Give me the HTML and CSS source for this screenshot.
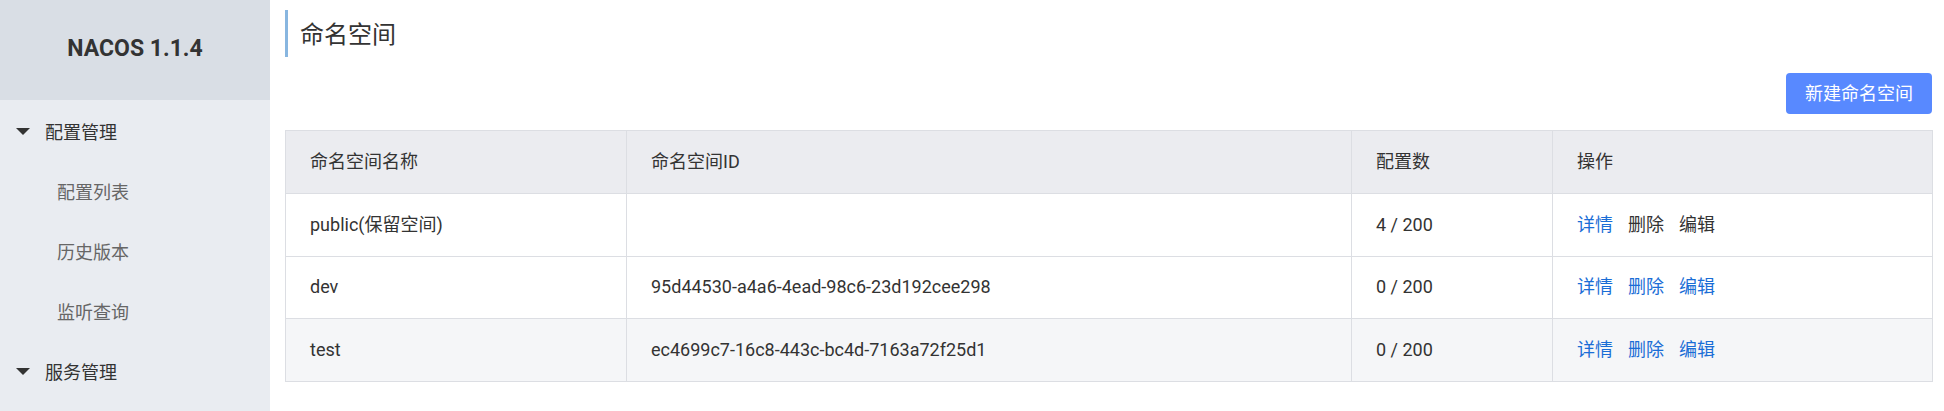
FILE: index.html
```html
<!DOCTYPE html>
<html lang="zh-CN">
<head>
<meta charset="utf-8">
<title>Nacos</title>
<link rel="stylesheet" href="styles.css">
</head>
<body>
<div class="layout">
  <aside class="sidebar">
    <div class="brand">NACOS 1.1.4</div>
    <ul class="menu">
      <li class="menu-group">
        <svg class="caret" width="14" height="7" viewBox="0 0 14 7"><path d="M0 0 H14 L7 7 Z" fill="#333"/></svg>
        <span>配置管理</span>
      </li>
      <li class="menu-item">配置列表</li>
      <li class="menu-item">历史版本</li>
      <li class="menu-item">监听查询</li>
      <li class="menu-group">
        <svg class="caret" width="14" height="7" viewBox="0 0 14 7"><path d="M0 0 H14 L7 7 Z" fill="#333"/></svg>
        <span>服务管理</span>
      </li>
    </ul>
  </aside>
  <main class="main">
    <h1 class="page-title">命名空间</h1>
    <div class="toolbar">
      <button class="btn-primary">新建命名空间</button>
    </div>
    <table class="grid">
      <colgroup>
        <col class="c1"><col class="c2"><col class="c3"><col class="c4">
      </colgroup>
      <thead>
        <tr><th>命名空间名称</th><th>命名空间ID</th><th>配置数</th><th>操作</th></tr>
      </thead>
      <tbody>
        <tr>
          <td>public(保留空间)</td>
          <td></td>
          <td>4 / 200</td>
          <td><a class="link">详情</a><span class="link disabled">删除</span><span class="link disabled">编辑</span></td>
        </tr>
        <tr>
          <td>dev</td>
          <td>95d44530-a4a6-4ead-98c6-23d192cee298</td>
          <td>0 / 200</td>
          <td><a class="link">详情</a><a class="link">删除</a><a class="link">编辑</a></td>
        </tr>
        <tr class="striped">
          <td>test</td>
          <td>ec4699c7-16c8-443c-bc4d-7163a72f25d1</td>
          <td>0 / 200</td>
          <td><a class="link">详情</a><a class="link">删除</a><a class="link">编辑</a></td>
        </tr>
      </tbody>
    </table>
  </main>
</div>
</body>
</html>
```
FILE: styles.css
```css
* { box-sizing: border-box; }
html, body { margin: 0; padding: 0; height: 100%; }
body {
  font-family: Roboto, "Noto Sans CJK SC", sans-serif;
  font-size: 18px;
  color: #333;
  background: #fff;
}
.layout { display: flex; height: 100%; }
.sidebar {
  width: 270px;
  flex: none;
  background: #e9ecf1;
  height: 100%;
}
.brand {
  height: 100px;
  background: #d9dee5;
  display: flex;
  align-items: center;
  justify-content: center;
  font-family: Roboto, sans-serif;
  font-weight: 700;
  font-size: 23px;
  color: #333;
  padding-bottom: 4px;
}
.menu { list-style: none; margin: 0; padding: 0; }
.menu-group, .menu-item {
  height: 60px;
  display: flex;
  align-items: center;
  font-size: 18px;
  line-height: 24px;
  padding-top: 5px;
}
.menu-group { color: #333; padding-left: 16px; }
.caret { margin-right: 15px; margin-top: -2px; }
.menu-item { color: #666; padding-left: 57px; }
.main {
  flex: 1;
  min-width: 0;
  padding: 10px 12px 0 15px;
}
.page-title {
  margin: 0;
  height: 47px;
  padding-top: 3px;
  line-height: 44px;
  border-left: 3px solid #88b6e0;
  padding-left: 12px;
  font-size: 24px;
  font-weight: 400;
  color: #333;
}
.toolbar {
  display: flex;
  justify-content: flex-end;
  margin-top: 16px;
  margin-bottom: 16px;
}
.btn-primary {
  height: 41px;
  padding: 0 19px;
  border: none;
  border-radius: 4px;
  background: #5889ff;
  color: #fff;
  font-family: Roboto, "Noto Sans CJK SC", sans-serif;
  font-size: 18px;
  line-height: 41px;
}
.grid {
  width: 100%;
  border-collapse: collapse;
  table-layout: fixed;
  border: 1px solid #dcdee3;
}
.c1 { width: 341px; }
.c2 { width: 725px; }
.c3 { width: 201px; }
.c4 { width: 380px; }
.grid th, .grid td {
  border: 1px solid #dcdee3;
  padding: 0 0 0 24px;
  text-align: left;
  font-weight: 400;
  font-size: 18px;
  line-height: 24px;
  color: #333;
  white-space: nowrap;
}
.grid th { background: #ebecf0; height: 63px; }
.grid td { height: 62.6px; background: #fff; }
.grid tr.striped td { background: #f5f6f8; }
.link {
  color: #1a6dd6;
  margin-right: 15px;
  text-decoration: none;
}
.link.disabled { color: #333; }
```
